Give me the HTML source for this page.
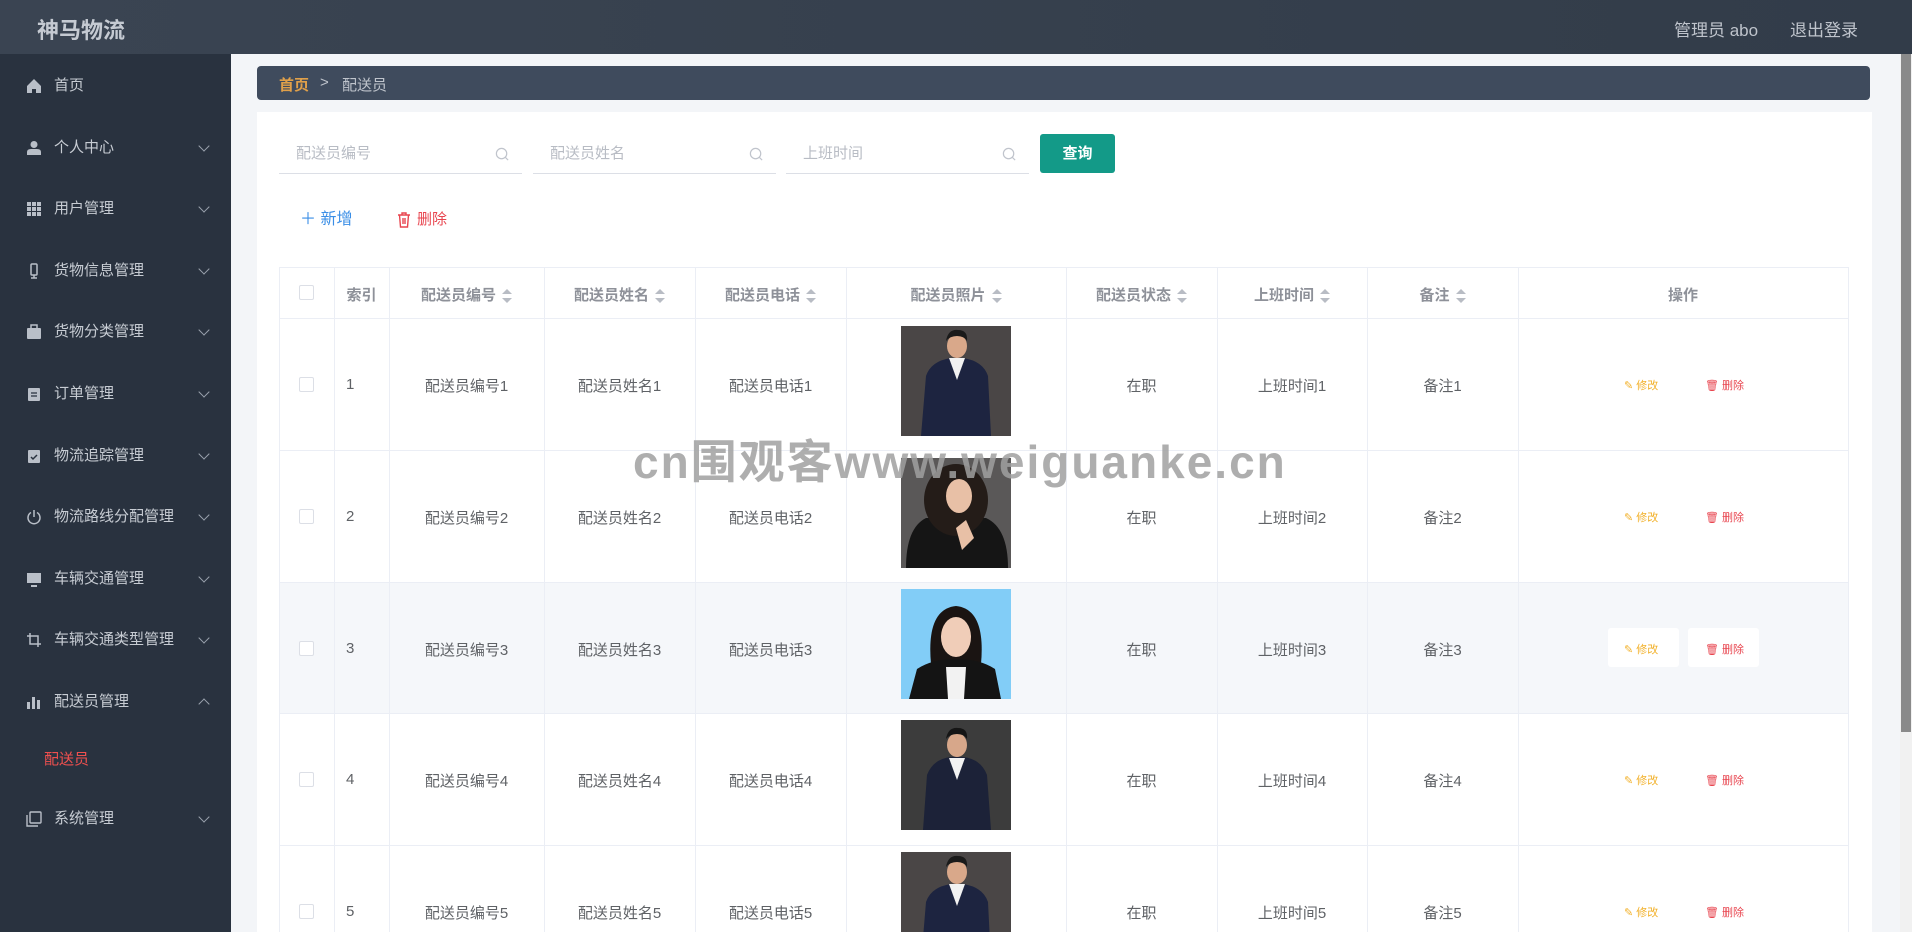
<!DOCTYPE html>
<html><head><meta charset="utf-8"><style>
*{margin:0;padding:0;box-sizing:border-box}
html,body{width:1912px;height:932px;overflow:hidden}
body{background:#f3f5f8;font-family:"Liberation Sans","Noto Sans CJK SC",sans-serif}
#wrap{position:relative;width:1912px;height:932px;overflow:hidden}
.a{position:absolute}
#hdr{left:0;top:0;width:1912px;height:54px;background:linear-gradient(90deg,#3a4452,#323c49);}
#side{left:0;top:54px;width:231px;height:878px;background:#29323f}
.mi{position:absolute;left:0;width:231px;height:40px;color:#c7ccd3;font-size:15px;line-height:40px}
.mi .ic{position:absolute;left:26px;top:12px;width:16px;height:16px}
.mi .t{position:absolute;left:54px}
.mi .ch{position:absolute;left:200px;top:14px;width:8px;height:8px;border-right:1.5px solid #9aa2ad;border-bottom:1.5px solid #9aa2ad;transform:rotate(45deg)}
.mi .up{top:18px;transform:rotate(-135deg)}
.inp{position:absolute;top:134px;height:40px;border-bottom:1px solid #dcdfe6;color:#b8bcc4;font-size:15px;line-height:40px;padding-left:17px}
.inp svg{position:absolute;right:12px;top:13px}
.th,.td{position:absolute;text-align:center;font-size:15px}
.th{color:#8e9199;font-weight:bold}
.td{color:#5f6266}
.vl{position:absolute;width:1px;background:#ebeef5}
.hl{position:absolute;height:1px;background:#ebeef5;left:279px;width:1570px}
.cb{position:absolute;left:299px;width:15px;height:15px;border:1px solid #dcdfe6;border-radius:2px;background:#fff}
.sort{display:inline-block;vertical-align:middle;margin-left:6px;width:10px;height:14px;position:relative}
.sort:before{content:"";position:absolute;left:0;top:0;border:5px solid transparent;border-bottom-color:#b8bcc4;border-top:0}
.sort:after{content:"";position:absolute;left:0;bottom:0;border:5px solid transparent;border-top-color:#b8bcc4;border-bottom:0}
.ed{position:absolute;font-size:11px;color:#f2b12b}
.dl{position:absolute;font-size:11px;color:#e8454f}
</style></head><body><div id="wrap">
<div id="hdr" class="a"></div>
<div class="a" style="left:37px;top:13px;font-size:22px;font-weight:bold;color:#c5cad2">神马物流</div>
<div class="a" style="left:1674px;top:16px;font-size:17px;color:#bfc4cc">管理员 abo</div>
<div class="a" style="left:1790px;top:16px;font-size:17px;color:#bfc4cc">退出登录</div>

<div id="side" class="a"></div>
<div class="mi" style="top:66px"><svg class="ic" viewBox="0 0 16 16"><path d="M8 1L1 8v7h5v-4h4v4h5V8z" fill="#b9bfc8"/></svg><span class="t">首页</span></div>
<div class="mi" style="top:128px"><svg class="ic" viewBox="0 0 16 16"><circle cx="8" cy="4.5" r="3.5" fill="#b9bfc8"/><path d="M1 15v-3q0-3 4-3h6q4 0 4 3v3z" fill="#b9bfc8"/></svg><span class="t">个人中心</span><i class="ch"></i></div>
<div class="mi" style="top:189px"><svg class="ic" viewBox="0 0 16 16" fill="#b9bfc8"><rect x="1" y="1" width="4" height="4"/><rect x="6" y="1" width="4" height="4"/><rect x="11" y="1" width="4" height="4"/><rect x="1" y="6" width="4" height="4"/><rect x="6" y="6" width="4" height="4"/><rect x="11" y="6" width="4" height="4"/><rect x="1" y="11" width="4" height="4"/><rect x="6" y="11" width="4" height="4"/><rect x="11" y="11" width="4" height="4"/></svg><span class="t">用户管理</span><i class="ch"></i></div>
<div class="mi" style="top:251px"><svg class="ic" viewBox="0 0 16 16"><rect x="5" y="1" width="6" height="11" rx="1" fill="none" stroke="#b9bfc8" stroke-width="1.5"/><path d="M8 12v3M5 15h6" stroke="#b9bfc8" stroke-width="1.5"/></svg><span class="t">货物信息管理</span><i class="ch"></i></div>
<div class="mi" style="top:312px"><svg class="ic" viewBox="0 0 16 16"><rect x="1" y="4" width="14" height="11" rx="1" fill="#b9bfc8"/><rect x="5" y="1" width="6" height="4" fill="none" stroke="#b9bfc8" stroke-width="1.5"/></svg><span class="t">货物分类管理</span><i class="ch"></i></div>
<div class="mi" style="top:374px"><svg class="ic" viewBox="0 0 16 16"><rect x="2" y="2" width="12" height="13" rx="1" fill="#b9bfc8"/><path d="M5 7h6M5 10h6" stroke="#29323f" stroke-width="1.3"/></svg><span class="t">订单管理</span><i class="ch"></i></div>
<div class="mi" style="top:436px"><svg class="ic" viewBox="0 0 16 16"><rect x="2" y="2" width="12" height="13" rx="1" fill="#b9bfc8"/><path d="M5 9l2 2 4-4" stroke="#29323f" stroke-width="1.5" fill="none"/></svg><span class="t">物流追踪管理</span><i class="ch"></i></div>
<div class="mi" style="top:497px"><svg class="ic" viewBox="0 0 16 16"><path d="M5 3.5A6 6 0 1 0 11 3.5" fill="none" stroke="#b9bfc8" stroke-width="1.5"/><path d="M8 1v7" stroke="#b9bfc8" stroke-width="1.5"/></svg><span class="t">物流路线分配管理</span><i class="ch"></i></div>
<div class="mi" style="top:559px"><svg class="ic" viewBox="0 0 16 16"><rect x="1" y="2" width="14" height="10" fill="#b9bfc8"/><path d="M5 15h6" stroke="#b9bfc8" stroke-width="2"/></svg><span class="t">车辆交通管理</span><i class="ch"></i></div>
<div class="mi" style="top:620px"><svg class="ic" viewBox="0 0 16 16"><path d="M4 1v11h11M1 4h11v11" fill="none" stroke="#b9bfc8" stroke-width="1.5"/></svg><span class="t">车辆交通类型管理</span><i class="ch"></i></div>
<div class="mi" style="top:682px"><svg class="ic" viewBox="0 0 16 16" fill="#b9bfc8"><rect x="1" y="8" width="3" height="7"/><rect x="6" y="3" width="3" height="12"/><rect x="11" y="6" width="3" height="9"/></svg><span class="t">配送员管理</span><i class="ch up"></i></div>
<div class="mi" style="top:740px;color:#f0504f"><span class="t" style="left:44px">配送员</span></div>
<div class="mi" style="top:799px"><svg class="ic" viewBox="0 0 16 16"><rect x="4" y="1" width="11" height="11" rx="1" fill="none" stroke="#b9bfc8" stroke-width="1.4"/><path d="M1 4v11h11" fill="none" stroke="#b9bfc8" stroke-width="1.4"/></svg><span class="t">系统管理</span><i class="ch"></i></div>

<div class="a" style="left:1900px;top:54px;width:12px;height:878px;background:#f1f1f1"></div>
<div class="a" style="left:1901px;top:54px;width:10px;height:678px;background:#8a8a8a"></div>

<div class="a" style="left:257px;top:66px;width:1613px;height:34px;background:#3f4b5d;border-radius:4px"></div>
<div class="a" style="left:279px;top:74px;font-size:15px;color:#e0a04a;font-weight:bold">首页</div>
<div class="a" style="left:320px;top:74px;font-size:15px;color:#bfc4cc">&gt;</div>
<div class="a" style="left:342px;top:74px;font-size:15px;color:#bfc4cc">配送员</div>

<div class="a" style="left:257px;top:112px;width:1615px;height:820px;background:#fff"></div>

<div class="inp" style="left:279px;width:243px">配送员编号<svg width="15" height="15" viewBox="0 0 16 16"><circle cx="7" cy="7" r="5.5" fill="none" stroke="#c0c4cc" stroke-width="1.3"/><path d="M11 11l3 3" stroke="#c0c4cc" stroke-width="1.3"/></svg></div>
<div class="inp" style="left:533px;width:243px">配送员姓名<svg width="15" height="15" viewBox="0 0 16 16"><circle cx="7" cy="7" r="5.5" fill="none" stroke="#c0c4cc" stroke-width="1.3"/><path d="M11 11l3 3" stroke="#c0c4cc" stroke-width="1.3"/></svg></div>
<div class="inp" style="left:786px;width:243px">上班时间<svg width="15" height="15" viewBox="0 0 16 16"><circle cx="7" cy="7" r="5.5" fill="none" stroke="#c0c4cc" stroke-width="1.3"/><path d="M11 11l3 3" stroke="#c0c4cc" stroke-width="1.3"/></svg></div>
<div class="a" style="left:1040px;top:134px;width:75px;height:39px;background:#139a88;border-radius:3px;color:#fff;font-size:15px;line-height:39px;text-align:center;font-weight:bold">查询</div>

<div class="a" style="left:300px;top:210px;font-size:16px;color:#3a8ee6;line-height:20px">＋ 新增</div>
<svg class="a" style="left:397px;top:212px" width="14" height="16" viewBox="0 0 14 16"><path d="M1 3h12M5 3V1h4v2M2.5 3l1 12h7l1-12M6 6v6M8 6v6" fill="none" stroke="#e8454f" stroke-width="1.4"/></svg>
<div class="a" style="left:417px;top:210px;font-size:15px;color:#e8454f;line-height:20px">删除</div>

<div class="a" style="left:279px;top:582px;width:1570px;height:131px;background:#f5f7fa"></div>
<div class="hl" style="top:267px"></div>
<div class="hl" style="top:318px"></div>
<div class="hl" style="top:450px"></div>
<div class="hl" style="top:582px"></div>
<div class="hl" style="top:713px"></div>
<div class="hl" style="top:845px"></div>
<div class="vl" style="left:279px;top:267px;height:665px"></div>
<div class="vl" style="left:334px;top:267px;height:665px"></div>
<div class="vl" style="left:389px;top:267px;height:665px"></div>
<div class="vl" style="left:544px;top:267px;height:665px"></div>
<div class="vl" style="left:695px;top:267px;height:665px"></div>
<div class="vl" style="left:846px;top:267px;height:665px"></div>
<div class="vl" style="left:1066px;top:267px;height:665px"></div>
<div class="vl" style="left:1217px;top:267px;height:665px"></div>
<div class="vl" style="left:1367px;top:267px;height:665px"></div>
<div class="vl" style="left:1518px;top:267px;height:665px"></div>
<div class="vl" style="left:1848px;top:267px;height:665px"></div>

<div class="cb" style="top:285px"></div>
<div class="th" style="left:334px;width:55px;top:284px">索引</div>
<div class="th" style="left:389px;width:155px;top:284px">配送员编号<i class="sort"></i></div>
<div class="th" style="left:544px;width:151px;top:284px">配送员姓名<i class="sort"></i></div>
<div class="th" style="left:695px;width:151px;top:284px">配送员电话<i class="sort"></i></div>
<div class="th" style="left:846px;width:220px;top:284px">配送员照片<i class="sort"></i></div>
<div class="th" style="left:1066px;width:151px;top:284px">配送员状态<i class="sort"></i></div>
<div class="th" style="left:1217px;width:150px;top:284px">上班时间<i class="sort"></i></div>
<div class="th" style="left:1367px;width:151px;top:284px">备注<i class="sort"></i></div>
<div class="th" style="left:1518px;width:330px;top:284px">操作</div>

<svg width="0" height="0" style="position:absolute"><defs>
<g id="man"><rect width="110" height="110" fill="#4a4646"/><path d="M20 110l5-60q5-15 25-18h12q20 3 25 18l3 60z" fill="#1d2440"/><path d="M48 32l8 22 8-22z" fill="#f2f2f2"/><ellipse cx="56" cy="20" rx="10" ry="12" fill="#d9a88a"/><path d="M45 15q2-12 12-11q10 0 9 11q-3-5-10-5t-11 5z" fill="#1a1a1a"/></g>
</defs></svg>

<div class="cb" style="top:377px"></div><div class="td" style="left:346px;top:376px">1</div>
<div class="td" style="left:389px;width:155px;top:375px">配送员编号1</div><div class="td" style="left:544px;width:151px;top:375px">配送员姓名1</div><div class="td" style="left:695px;width:151px;top:375px">配送员电话1</div>
<svg class="a" style="left:901px;top:326px" width="110" height="110"><use href="#man"/></svg>
<div class="td" style="left:1066px;width:151px;top:375px">在职</div><div class="td" style="left:1217px;width:150px;top:375px">上班时间1</div><div class="td" style="left:1367px;width:151px;top:375px">备注1</div>
<div class="ed" style="left:1624px;top:377px">✎ 修改</div><div class="dl" style="left:1705px;top:377px">🗑 删除</div>

<div class="cb" style="top:509px"></div><div class="td" style="left:346px;top:508px">2</div>
<div class="td" style="left:389px;width:155px;top:507px">配送员编号2</div><div class="td" style="left:544px;width:151px;top:507px">配送员姓名2</div><div class="td" style="left:695px;width:151px;top:507px">配送员电话2</div>
<svg class="a" style="left:901px;top:458px" width="110" height="110"><rect width="110" height="110" fill="#5a5858"/><path d="M5 110q0-40 20-50h60q22 10 22 50z" fill="#151515"/><ellipse cx="55" cy="42" rx="32" ry="36" fill="#241c18"/><ellipse cx="58" cy="38" rx="13" ry="17" fill="#e8c0a6"/><path d="M55 70l10-8 8 18-12 12z" fill="#e8c0a6"/></svg>
<div class="td" style="left:1066px;width:151px;top:507px">在职</div><div class="td" style="left:1217px;width:150px;top:507px">上班时间2</div><div class="td" style="left:1367px;width:151px;top:507px">备注2</div>
<div class="ed" style="left:1624px;top:509px">✎ 修改</div><div class="dl" style="left:1705px;top:509px">🗑 删除</div>

<div class="cb" style="top:641px"></div><div class="td" style="left:346px;top:640px">3</div>
<div class="td" style="left:389px;width:155px;top:639px">配送员编号3</div><div class="td" style="left:544px;width:151px;top:639px">配送员姓名3</div><div class="td" style="left:695px;width:151px;top:639px">配送员电话3</div>
<svg class="a" style="left:901px;top:589px" width="110" height="110"><rect width="110" height="110" fill="#82cdf7"/><path d="M30 75q-5-55 25-58q30 3 25 58z" fill="#1a1412"/><ellipse cx="55" cy="48" rx="15" ry="20" fill="#f0cdb8"/><path d="M8 110l8-30q15-10 39-10t39 10l6 30z" fill="#141414"/><path d="M45 78h20l-2 32h-16z" fill="#f2f2f2"/></svg>
<div class="td" style="left:1066px;width:151px;top:639px">在职</div><div class="td" style="left:1217px;width:150px;top:639px">上班时间3</div><div class="td" style="left:1367px;width:151px;top:639px">备注3</div>
<div class="a" style="left:1608px;top:628px;width:71px;height:39px;background:#fff;border-radius:3px"></div>
<div class="a" style="left:1688px;top:628px;width:71px;height:39px;background:#fff;border-radius:3px"></div>
<div class="ed" style="left:1624px;top:641px">✎ 修改</div><div class="dl" style="left:1705px;top:641px">🗑 删除</div>

<div class="cb" style="top:772px"></div><div class="td" style="left:346px;top:771px">4</div>
<div class="td" style="left:389px;width:155px;top:770px">配送员编号4</div><div class="td" style="left:544px;width:151px;top:770px">配送员姓名4</div><div class="td" style="left:695px;width:151px;top:770px">配送员电话4</div>
<svg class="a" style="left:901px;top:720px" width="110" height="110"><rect width="110" height="110" fill="#3c3c3c"/><path d="M22 110l4-55q6-16 24-18h12q18 2 24 18l4 55z" fill="#1c2238"/><path d="M48 38l8 22 8-22z" fill="#f2f2f2"/><ellipse cx="56" cy="25" rx="10" ry="12" fill="#d7a78a"/><path d="M45 19q2-12 12-11q10 0 9 11q-3-5-10-5t-11 5z" fill="#151515"/></svg>
<div class="td" style="left:1066px;width:151px;top:770px">在职</div><div class="td" style="left:1217px;width:150px;top:770px">上班时间4</div><div class="td" style="left:1367px;width:151px;top:770px">备注4</div>
<div class="ed" style="left:1624px;top:772px">✎ 修改</div><div class="dl" style="left:1705px;top:772px">🗑 删除</div>

<div class="cb" style="top:904px"></div><div class="td" style="left:346px;top:903px">5</div>
<div class="td" style="left:389px;width:155px;top:902px">配送员编号5</div><div class="td" style="left:544px;width:151px;top:902px">配送员姓名5</div><div class="td" style="left:695px;width:151px;top:902px">配送员电话5</div>
<svg class="a" style="left:901px;top:852px" width="110" height="80"><use href="#man"/></svg>
<div class="td" style="left:1066px;width:151px;top:902px">在职</div><div class="td" style="left:1217px;width:150px;top:902px">上班时间5</div><div class="td" style="left:1367px;width:151px;top:902px">备注5</div>
<div class="ed" style="left:1624px;top:904px">✎ 修改</div><div class="dl" style="left:1705px;top:904px">🗑 删除</div>

<div class="a" style="left:633px;top:426px;font-size:46px;font-weight:bold;color:rgba(160,160,160,0.85);letter-spacing:2px;white-space:nowrap">cn围观客www.weiguanke.cn</div>
</div></body></html>
